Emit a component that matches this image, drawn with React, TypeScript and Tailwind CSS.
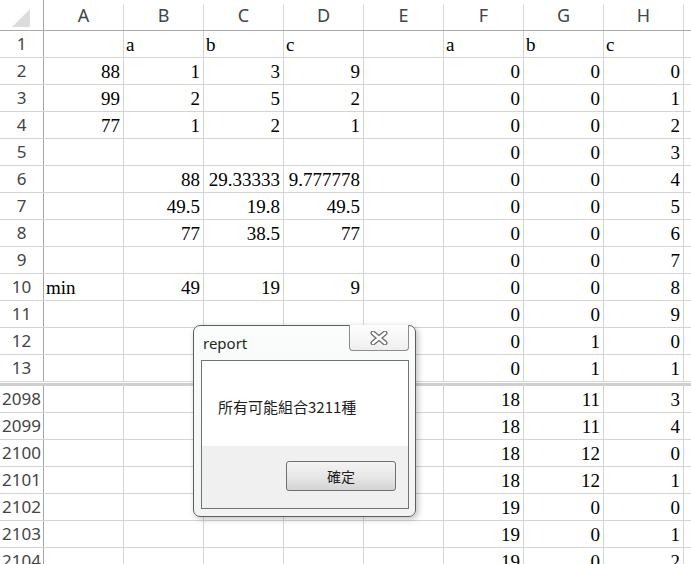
import React from "react";

const cols = ["A", "B", "C", "D", "E", "F", "G", "H"];

type Cell = string | number | null;

// text cells are left aligned, numbers right aligned (like the sheet)
const topRows: [string, Cell[]][] = [
  ["1", [null, "a", "b", "c", null, "a", "b", "c"]],
  ["2", [88, 1, 3, 9, null, 0, 0, 0]],
  ["3", [99, 2, 5, 2, null, 0, 0, 1]],
  ["4", [77, 1, 2, 1, null, 0, 0, 2]],
  ["5", [null, null, null, null, null, 0, 0, 3]],
  ["6", [null, 88, "29.33333#", "9.777778#", null, 0, 0, 4]],
  ["7", [null, 49.5, 19.8, 49.5, null, 0, 0, 5]],
  ["8", [null, 77, 38.5, 77, null, 0, 0, 6]],
  ["9", [null, null, null, null, null, 0, 0, 7]],
  ["10", ["min", 49, 19, 9, null, 0, 0, 8]],
  ["11", [null, null, null, null, null, 0, 0, 9]],
  ["12", [null, null, null, null, null, 0, 1, 0]],
  ["13", [null, null, null, null, null, 0, 1, 1]],
];

const bottomRows: [string, Cell[]][] = [
  ["2098", [null, null, null, null, null, 18, 11, 3]],
  ["2099", [null, null, null, null, null, 18, 11, 4]],
  ["2100", [null, null, null, null, null, 18, 12, 0]],
  ["2101", [null, null, null, null, null, 18, 12, 1]],
  ["2102", [null, null, null, null, null, 19, 0, 0]],
  ["2103", [null, null, null, null, null, 19, 0, 1]],
  ["2104", [null, null, null, null, null, 19, 0, 2]],
];

function SheetRow({ num, cells }: { num: string; cells: Cell[] }) {
  return (
    <div className="flex h-[27px] border-b border-[#d4d4d4]">
      <div className="w-[44px] shrink-0 border-r border-[#a6a6a6] flex items-center justify-center text-[17px] text-[#444] font-['Noto_Sans',sans-serif] whitespace-nowrap overflow-visible">
        {num}
      </div>
      {cells.map((c, i) => {
        const isNum = typeof c === "number" || (typeof c === "string" && c.endsWith("#"));
        const text = typeof c === "string" ? c.replace("#", "") : c;
        return (
          <div
            key={i}
            className={`w-[80px] shrink-0 border-r border-[#d4d4d4] flex items-end pb-[1px] text-[19px] leading-[22px] text-black font-['Liberation_Serif',serif] ${
              isNum ? "justify-end pr-[3px]" : "justify-start pl-[2px]"
            }`}
          >
            {text}
          </div>
        );
      })}
      <div className="flex-1" />
    </div>
  );
}

function CloseGlyph() {
  return (
    <svg width="20" height="14" viewBox="0 0 20 14">
      <g strokeLinecap="round">
        <path d="M4 2 L16 12 M16 2 L4 12" stroke="#6b6b6b" strokeWidth="5" />
        <path d="M4 2 L16 12 M16 2 L4 12" stroke="#ffffff" strokeWidth="2.6" />
      </g>
    </svg>
  );
}

function ReportDialog() {
  return (
    <div className="absolute left-[193px] top-[325px] w-[223px] h-[192px] rounded-[7px] border border-[#5e5e5e] bg-gradient-to-b from-[#fbfcfc] to-[#f1f3f4] shadow-[2px_2px_6px_rgba(0,0,0,0.25)]">
      <div className="relative h-[34px]">
        <div className="absolute left-[9px] top-[6px] text-[15px] leading-[22px] text-[#1b2a1b] font-['Noto_Sans',sans-serif]">
          report
        </div>
        <div className="absolute left-[155px] top-[-1px] w-[60px] h-[26px] border border-[#8d8d8d] border-t-0 rounded-b-[4px] bg-gradient-to-b from-[#ffffff] to-[#eeeeee] flex items-center justify-center">
          <CloseGlyph />
        </div>
      </div>
      <div className="ml-[7px] w-[208px] h-[149px] border border-[#727272] flex flex-col">
        <div className="h-[85px] bg-white pl-[16px] pt-[36px] text-[15px] leading-[20px] text-[#1e1e1e] font-['Noto_Sans_CJK_TC','Noto_Sans',sans-serif]">
          所有可能組合3211種
        </div>
        <div className="flex-1 bg-[#f0f0f0] pl-[84px] pt-[15px]">
          <div className="w-[110px] h-[30px] rounded-[3px] border border-[#707070] bg-gradient-to-b from-[#f3f3f3] via-[#e8e8e8] to-[#d3d3d3] flex items-center justify-center text-[14px] text-[#1e1e1e] font-['Noto_Sans_CJK_TC',sans-serif]">
            確定
          </div>
        </div>
      </div>
    </div>
  );
}

export default function App() {
  return (
    <div className="relative w-[691px] h-[564px] overflow-hidden bg-white">
      {/* column headers */}
      <div className="flex h-[31px] border-b border-[#ababab]">
        <div className="w-[44px] shrink-0 border-r border-[#a6a6a6] relative">
          <svg className="absolute left-[11px] top-[8px]" width="20" height="20" viewBox="0 0 20 20">
            <polygon points="19,1 19,19 1,19" fill="#dcdcdc" />
          </svg>
        </div>
        {cols.map((c) => (
          <div
            key={c}
            className="w-[80px] shrink-0 mt-[4px] border-r border-[#d8d8d8] flex items-center justify-center pb-[4px] text-[18px] text-[#444] font-['Noto_Sans',sans-serif]"
          >
            {c}
          </div>
        ))}
        <div className="flex-1" />
      </div>

      {topRows.map(([n, cells]) => (
        <SheetRow key={n} num={n} cells={cells} />
      ))}

      {/* frozen pane split */}
      <div className="h-[1px] bg-white" />
      <div className="h-[3px] bg-[#cfcfcf]" />

      {bottomRows.map(([n, cells]) => (
        <SheetRow key={n} num={n} cells={cells} />
      ))}

      <ReportDialog />
    </div>
  );
}
